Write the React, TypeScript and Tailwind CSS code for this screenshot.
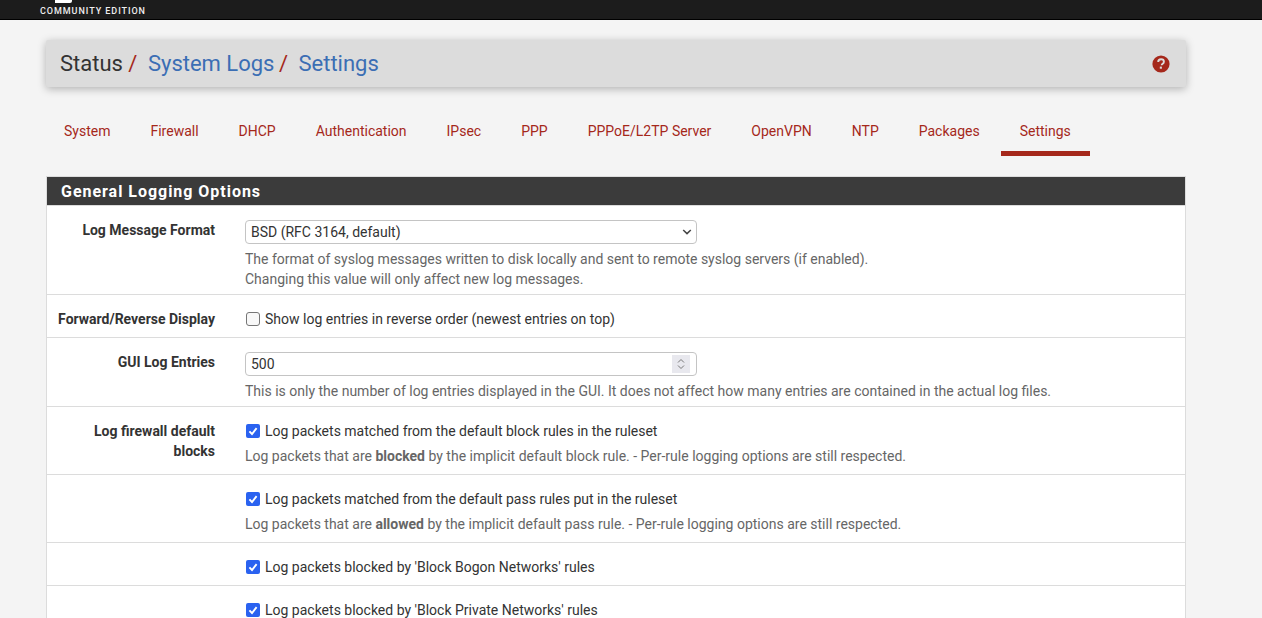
const tabs = ['System', 'Firewall', 'DHCP', 'Authentication', 'IPsec', 'PPP', 'PPPoE/L2TP Server', 'OpenVPN', 'NTP', 'Packages', 'Settings'];

function Check({ checked }: { checked?: boolean }) {
	if (!checked) {
		return <span className="h-[14px] w-[14px] shrink-0 rounded-[3px] border border-[#767676] bg-[#f8f8f8]" />;
	}
	return (
		<span className="flex h-[14px] w-[14px] shrink-0 items-center justify-center rounded-[2px] bg-[#2a62f0]">
			<svg viewBox="0 0 14 14" className="h-[14px] w-[14px]" fill="none">
				<path d="M3.4 7.4 6 10l4.6-5.8" stroke="#fff" strokeWidth="1.9" />
			</svg>
		</span>
	);
}

function Row({ label, h, children }: { label?: React.ReactNode; h: string; children: React.ReactNode }) {
	return (
		<div className={`flex border-t border-[#dcdcdc] ${h}`}>
			<div className="w-[168px] shrink-0 pt-[14px] text-right text-[14px] leading-[20px] font-bold text-[#333]">{label}</div>
			<div className="ml-[30px] min-w-0 flex-1 pt-[14px]">{children}</div>
		</div>
	);
}

function CheckLine({ checked, children }: { checked?: boolean; children: React.ReactNode }) {
	return (
		<div className="flex h-[20px] items-center gap-[5px] pl-[1px] text-[14px] text-[#333]">
			<Check checked={checked} />
			<span>{children}</span>
		</div>
	);
}

export default function App() {
	return (
		<div className="h-[618px] overflow-hidden bg-[#f4f4f4] font-['Roboto',sans-serif]">
			<div className="h-[20px] overflow-hidden border-b border-black bg-[#1c1c1c] pl-[40px]">
				<div className="ml-[15px] h-[3px] w-[17px] rounded-br-[2px] bg-white" />
				<div className="h-[16px] pt-[2px] text-[9px] leading-[12px] font-medium tracking-[0.95px] text-[#eee]">COMMUNITY EDITION</div>
			</div>

			<div className="ml-[46px] w-[1140px]">
				<div className="mt-[20px] flex h-[47px] items-center justify-between rounded-[2px] bg-[#dcdcdc] pr-[16px] pl-[14px] shadow-[0_2px_8px_rgba(0,0,0,0.28)]">
					<div className="pt-[1px] text-[22px] leading-[30px] text-[#333]">
						Status<span className="text-[#a5281b]"> / </span>
						<span className="ml-[5px] text-[#3b6eb4]">System Logs</span>
						<span className="-ml-px text-[#a5281b]"> / </span>
						<span className="ml-[5px] text-[#3b6eb4]">Settings</span>
					</div>
					<svg viewBox="0 0 18 18" className="h-[18px] w-[18px]">
						<circle cx="9" cy="9" r="8.6" fill="#a5281b" />
						<path d="M6.2 7c0-1.7 1.2-2.7 2.9-2.7 1.6 0 2.8 1 2.8 2.4 0 1.2-.7 1.8-1.5 2.3-.5.3-.7.6-.7 1.2" stroke="#dcdcdc" strokeWidth="1.9" fill="none" />
						<rect x="7.8" y="11.6" width="2.1" height="2.1" fill="#dcdcdc" />
					</svg>
				</div>

				<div className="mt-[20px] -ml-px flex h-[49px]">
					{tabs.map(t => (
						<div
							key={t}
							className={`mr-[2px] h-[49px] px-[19px] pt-[14px] text-[14px] leading-[20px] text-[#a5281b] ${t === 'Settings' ? 'border-b-[5px] border-[#a5281b]' : ''}`}
						>
							{t}
						</div>
					))}
				</div>

				<div className="mt-[20px] border-x border-[#dcdcdc] bg-white">
					<div className="h-[29px] border-t border-[#dcdcdc] bg-[#3b3b3b] pl-[14px] text-[16px] leading-[29px] font-bold tracking-[0.97px] text-white">General Logging Options</div>
					<Row label="Log Message Format" h="h-[89px]">
						<div className="flex h-[24px] w-[452px] items-center justify-between rounded-[4px] border border-[#c4c4c4] bg-white pr-[4px] pl-[5px] text-[14px] text-[#333]">
							<span>BSD (RFC 3164, default)</span>
							<svg viewBox="0 0 10 6" className="h-[6px] w-[10px]" fill="none">
								<path d="M1.2 1 5 4.6 8.8 1" stroke="#444" strokeWidth="1.5" />
							</svg>
						</div>
						<div className="mt-[5px] text-[14px] leading-[20px] text-[#666]">
							The format of syslog messages written to disk locally and sent to remote syslog servers (if enabled).
							<br />
							Changing this value will only affect new log messages.
						</div>
					</Row>
					<Row label="Forward/Reverse Display" h="h-[43px]">
						<CheckLine>Show log entries in reverse order (newest entries on top)</CheckLine>
					</Row>
					<Row label="GUI Log Entries" h="h-[69px]">
						<div className="flex h-[24px] w-[452px] items-center justify-between rounded-[4px] border border-[#c4c4c4] bg-white pr-[6px] pl-[5px] text-[14px] text-[#333]">
							<span>500</span>
							<svg viewBox="0 0 18 18" className="h-[18px] w-[18px] bg-[#e8e8ee]" fill="none">
								<path d="M6 7.5 9 4.5l3 3M6 10.5l3 3 3-3" stroke="#777" strokeWidth="1" />
							</svg>
						</div>
						<div className="mt-[5px] text-[14px] leading-[21px] text-[#666]">
							This is only the number of log entries displayed in the GUI. It does not affect how many entries are contained in the actual log files.
						</div>
					</Row>
					<Row label={<>Log firewall default<br />blocks</>} h="h-[68px]">
						<CheckLine checked>Log packets matched from the default block rules in the ruleset</CheckLine>
						<div className="mt-[5px] text-[14px] leading-[20px] text-[#666]">
							Log packets that are <b>blocked</b> by the implicit default block rule. - Per-rule logging options are still respected.
						</div>
					</Row>
					<Row h="h-[68px]">
						<CheckLine checked>Log packets matched from the default pass rules put in the ruleset</CheckLine>
						<div className="mt-[5px] text-[14px] leading-[20px] text-[#666]">
							Log packets that are <b>allowed</b> by the implicit default pass rule. - Per-rule logging options are still respected.
						</div>
					</Row>
					<Row h="h-[43px]">
						<CheckLine checked>Log packets blocked by 'Block Bogon Networks' rules</CheckLine>
					</Row>
					<Row h="h-[43px]">
						<CheckLine checked>Log packets blocked by 'Block Private Networks' rules</CheckLine>
					</Row>
				</div>
			</div>
		</div>
	);
}
